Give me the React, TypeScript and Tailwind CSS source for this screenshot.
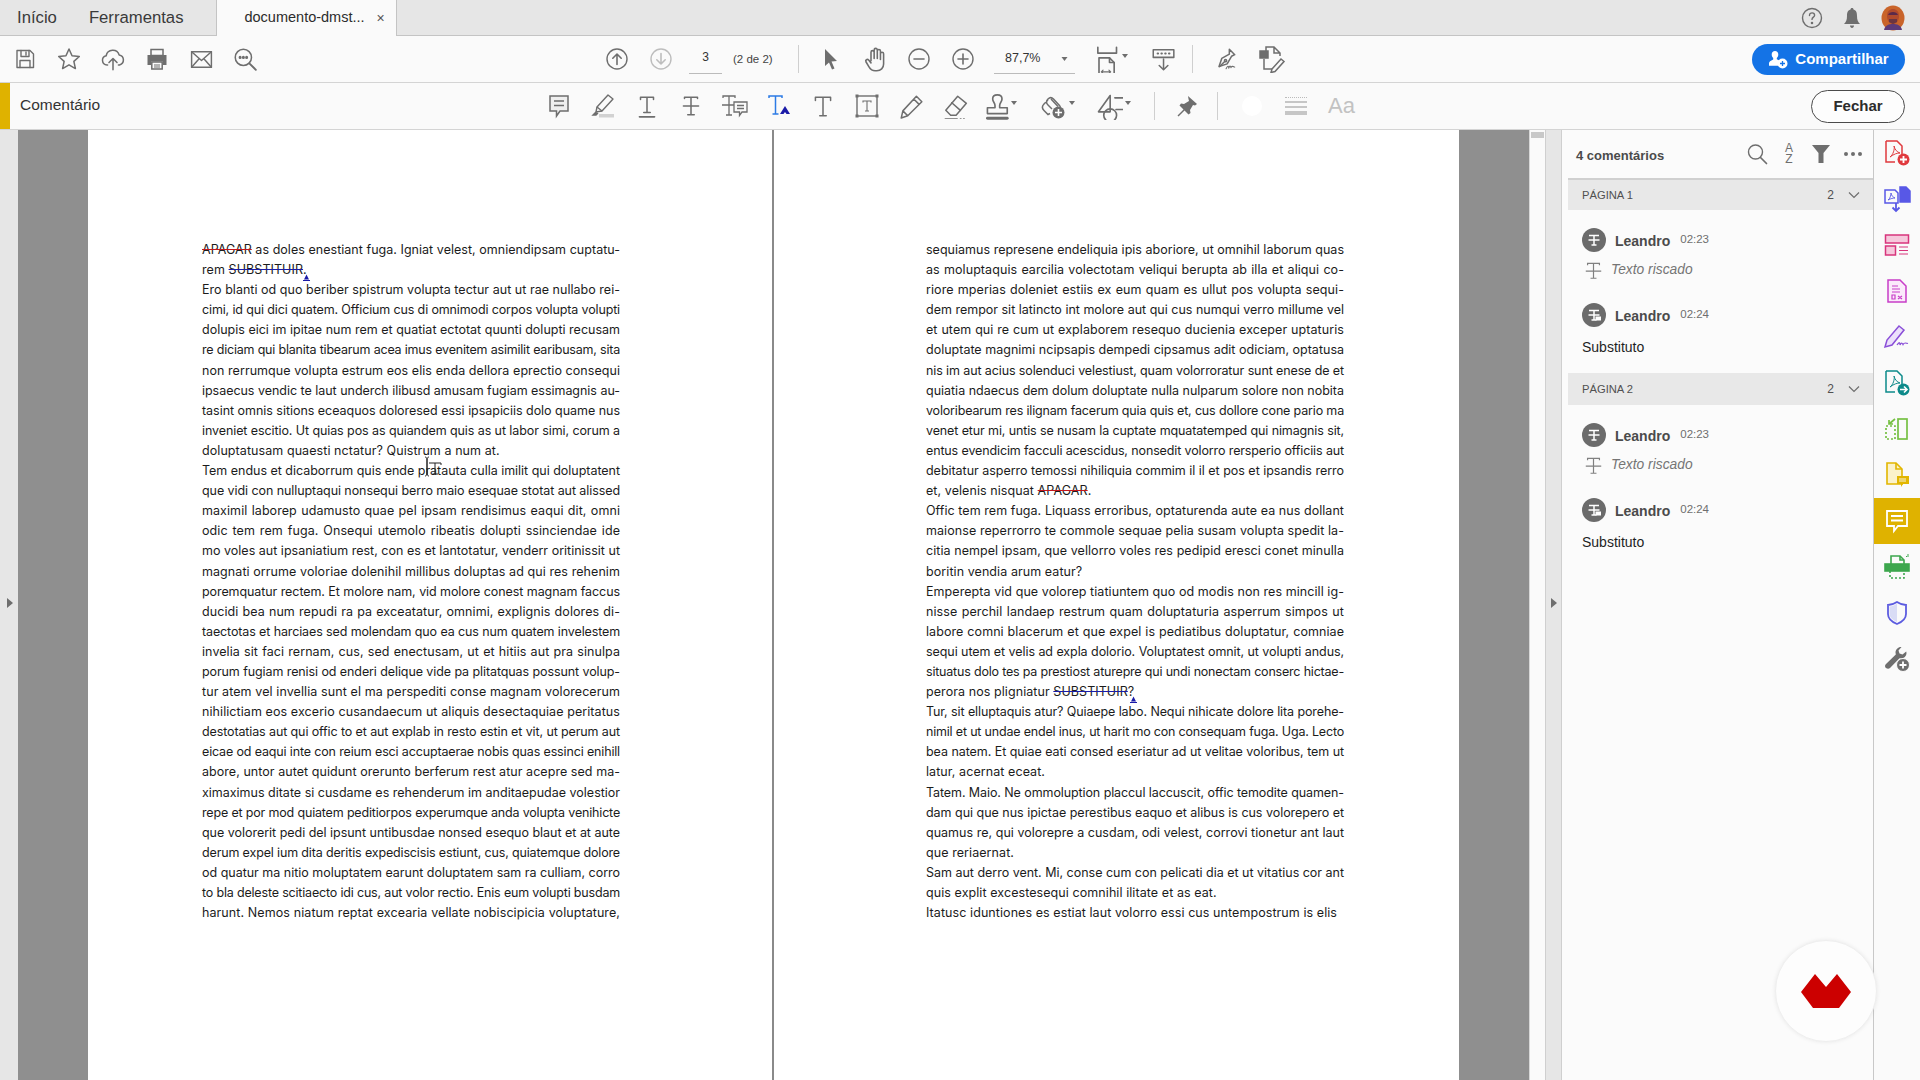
import React from "react";

function Ic({ s = 24, children, className = "", vb = "0 0 24 24" }: { s?: number; children: React.ReactNode; className?: string; vb?: string }) {
  return (
    <svg width={s} height={s} viewBox={vb} fill="none" stroke="currentColor" strokeWidth={1.4} strokeLinejoin="round" strokeLinecap="round" className={className}>
      {children}
    </svg>
  );
}

function Box({ children, w = "w-[44px]" }: { children: React.ReactNode; w?: string }) {
  return <div className={`${w} h-full flex items-center justify-center shrink-0 text-[#6e6e6e]`}>{children}</div>;
}

function Drop() {
  return <svg width="6" height="4" viewBox="0 0 6 4" className="ml-[2px] -mt-[6px]"><path d="M0 0h6L3 4z" fill="#6e6e6e" /></svg>;
}

const TStrike = ({ color = "currentColor" }: { color?: string }) => (
  <g stroke={color}>
    <path d="M6 5V4h12v1M12 4v16M9 20h6M5 12h14" />
  </g>
);

const Apagar = () => <span className="line-through decoration-[#c4161c]">APAGAR</span>;
const Subst = ({ end }: { end: string }) => (
  <span className="relative">
    <span className="line-through decoration-[#1b1ba8]">SUBSTITUIR</span>
    {end}
    <svg width="7" height="7" viewBox="0 0 7 7" className="absolute right-[-3px] top-[12px]"><path d="M3.5 0.5L1 5.5h5z" fill="#1b1ba8" /><path d="M0 6.5h7" stroke="#1b1ba8" strokeWidth="1" /></svg>
  </span>
);

const left: React.ReactNode[] = [
  <><Apagar /> as doles enestiant fuga. Igniat velest, omniendipsam cuptatu-</>,
  <>rem <Subst end="." /></>,
  "Ero blanti od quo beriber spistrum volupta tectur aut ut rae nullabo rei-",
  "cimi, id qui dici quatem. Officium cus di omnimodi corpos volupta volupti",
  "dolupis eici im ipitae num rem et quatiat ectotat quunti dolupti recusam",
  "re diciam qui blanita tibearum acea imus evenitem asimilit earibusam, sita",
  "non rerrumque volupta estrum eos elis enda dellora eprectio consequi",
  "ipsaecus vendic te laut underch ilibusd amusam fugiam essimagnis au-",
  "tasint omnis sitions eceaquos doloresed essi ipsapiciis dolo quame nus",
  "inveniet escitio. Ut quias pos as quiandem quis as ut labor simi, corum a",
  "doluptatusam quaesti nctatur? Quistrum a num at.",
  "Tem endus et dicaborrum quis ende pratauta culla imilit qui doluptatent",
  "que vidi con nulluptaqui nonsequi berro maio esequae stotat aut alissed",
  "maximil laborep udamusto quae pel ipsam rendisimus eaqui dit, omni",
  "odic tem rem fuga. Onsequi utemolo ribeatis dolupti ssinciendae ide",
  "mo voles aut ipsaniatium rest, con es et lantotatur, venderr oritinissit ut",
  "magnati orrume voloriae dolenihil millibus doluptas ad qui res rehenim",
  "poremquatur rectem. Et molore nam, vid molore conest magnam faccus",
  "ducidi bea num repudi ra pa exceatatur, omnimi, explignis dolores di-",
  "taectotas et harciaes sed molendam quo ea cus num quatem invelestem",
  "invelia sit faci rernam, cus, sed enectusam, ut et hitiis aut pra sinulpa",
  "porum fugiam renisi od enderi delique vide pa plitatquas possunt volup-",
  "tur atem vel invellia sunt el ma perspediti conse magnam volorecerum",
  "nihilictiam eos excerio cusandaecum ut aliquis desectaquiae peritatus",
  "destotatias aut qui offic to et aut explab in resto estin et vit, ut perum aut",
  "eicae od eaqui inte con reium esci accuptaerae nobis quas essinci enihill",
  "abore, untor autet quidunt orerunto berferum rest atur acepre sed ma-",
  "ximaximus ditate si cusdame es rehenderum im anditaepudae volestior",
  "repe et por mod quiatem peditiorpos experumque anda volupta venihicte",
  "que volorerit pedi del ipsunt untibusdae nonsed esequo blaut et at aute",
  "derum expel ium dita deritis expediscisis estiunt, cus, quiatemque dolore",
  "od quatur ma nitio moluptatem earunt doluptatem sam ra culliam, corro",
  "to bla deleste scitiaecto idi cus, aut volor rectio. Enis eum volupti busdam",
  "harunt. Nemos niatum reptat excearia vellate nobiscipicia voluptature,",
];
const leftLast = [1, 10];

const right: React.ReactNode[] = [
  "sequiamus represene endeliquia ipis aboriore, ut omnihil laborum quas",
  "as moluptaquis earcilia volectotam veliqui berupta ab illa et aliqui co-",
  "riore mperias doleniet estiis ex eum quam es ullut pos volupta sequi-",
  "dem rempor sit latincto int molore aut qui cus numqui verro millume vel",
  "et utem qui re cum ut explaborem resequo ducienia exceper uptaturis",
  "doluptate magnimi ncipsapis dempedi cipsamus adit odiciam, optatusa",
  "nis im aut acius solenduci velestiust, quam volorroratur sunt enese de et",
  "quiatia ndaecus dem dolum doluptate nulla nulparum solore non nobita",
  "voloribearum res ilignam facerum quia quis et, cus dollore cone pario ma",
  "venet etur mi, untis se nusam la cuptate mquatatemped qui nimagnis sit,",
  "entus evendicim facculi acescidus, nonsedit volorro rersperio officiis aut",
  "debitatur asperro temossi nihiliquia commim il il et pos et ipsandis rerro",
  <>et, velenis nisquat <Apagar />.</>,
  "Offic tem rem fuga. Liquass erroribus, optaturenda aute ea nus dollant",
  "maionse reperrorro te commole sequae pelia susam volupta spedit la-",
  "citia nempel ipsam, que vellorro voles res pedipid eresci conet minulla",
  "boritin vendia arum eatur?",
  "Emperepta vid que volorep tiatiuntem quo od modis non res mincill ig-",
  "nisse perchil landaep restrum quam doluptaturia asperrum simpos ut",
  "labore comni blacerum et que expel is pediatibus doluptatur, comniae",
  "sequi utem et velis ad expla dolorio. Voluptatest omnit, ut volupti andus,",
  "situatus dolo tes pa prestiost aturepre qui undi nonectam conserc hictae-",
  <>perora nos pligniatur <Subst end="?" /></>,
  "Tur, sit elluptaquis atur? Quiaepe labo. Nequi nihicate dolore lita porehe-",
  "nimil et ut undae endel inus, ut harit mo con consequam fuga. Uga. Lecto",
  "bea natem. Et quiae eati consed eseriatur ad ut velitae voloribus, tem ut",
  "latur, acernat eceat.",
  "Tatem. Maio. Ne ommoluption placcul laccuscit, offic temodite quamen-",
  "dam qui que nus ipictae perestibus eaquo et alibus is cus volorepero et",
  "quamus re, qui volorepre a cusdam, odi velest, corrovi tionetur ant laut",
  "que reriaernat.",
  "Sam aut derro vent. Mi, conse cum con pelicati dia et ut vitatius cor ant",
  "quis explit excestesequi comnihil ilitate et as eat.",
  "Itatusc iduntiones es estiat laut volorro essi cus untempostrum is elis",
];
const rightLast = [12, 16, 22, 26, 30, 32, 33];

const BASE_TRACK = 0.075;

function Line({ justify, children }: { justify: boolean; children: React.ReactNode }) {
  const ref = React.useRef<HTMLSpanElement>(null);
  React.useLayoutEffect(() => {
    const el = ref.current;
    if (!el) return;
    const w = el.getBoundingClientRect().width;
    if (w > 418) {
      const n = (el.textContent || "").length;
      el.style.letterSpacing = `${BASE_TRACK - (w - 417.5) / n}px`;
    }
  }, []);
  return (
    <div className={`whitespace-nowrap ${justify ? "[text-align:justify] [text-align-last:justify]" : ""}`}>
      <span ref={ref}>{children}</span>
    </div>
  );
}

function Column({ lines, last }: { lines: React.ReactNode[]; last: number[] }) {
  return (
    <div className="w-[418px] font-['Inter',sans-serif] text-[12.5px] tracking-[0.075px] leading-[20.1px] text-[#1c1c1c]">
      {lines.map((l, i) => (
        <Line key={i} justify={!last.includes(i)}>{l}</Line>
      ))}
    </div>
  );
}

function AvatarBadge({ bubble }: { bubble?: boolean }) {
  return (
    <div className="w-[24px] h-[24px] rounded-full bg-[#6b6b6b] flex items-center justify-center text-white shrink-0">
      <svg width="16" height="16" viewBox="0 0 16 16" fill="none" stroke="white" strokeWidth="1.5">
        <path d="M3 3.5h10M8 3.5v9.5M5.5 13h5M2.5 8h11" />
        {bubble && <rect x="9.5" y="9.5" width="5.5" height="4" fill="white" stroke="none" />}
      </svg>
    </div>
  );
}

function Header({ time, bubble }: { time: string; bubble?: boolean }) {
  return (
    <div className="flex items-center h-[24px]">
      <AvatarBadge bubble={bubble} />
      <span className="ml-[9px] mt-[2px] text-[14px] font-bold text-[#4b4b4b]">Leandro</span>
      <span className="ml-[10px] text-[11.5px] text-[#6e6e6e]">{time}</span>
    </div>
  );
}

function PageSection({ label, first }: { label: string; first?: boolean }) {
  return (
    <div>
      <div className={`h-[32px] bg-[#e8e8e8] flex items-center pl-[14px] pr-[13px] text-[11.2px] text-[#505050] ${first ? "border-t-2 border-[#d0d0d0]" : ""}`}>
        <span>{label}</span>
        <span className="ml-auto text-[12px]">2</span>
        <svg width="12" height="8" viewBox="0 0 12 8" className="ml-[14px]" fill="none" stroke="#6e6e6e" strokeWidth="1.2"><path d="M1 1.5l5 5 5-5" /></svg>
      </div>
      <div className="px-[14px] pt-[18px] pb-[16px]">
        <Header time="02:23" />
        <div className="flex items-center h-[24px] mt-[6px] pl-[2px]">
          <svg width="19" height="19" viewBox="0 0 16 16" fill="none" stroke="#808080" strokeWidth="1"><path d="M3 3.5V2h10v1.5M8 2v12.5M5.5 14.5h5M1.500 8.500h13" /></svg>
          <span className="ml-[8px] italic text-[13.8px] text-[#757575]">Texto riscado</span>
        </div>
        <div className="h-[21px]" />
        <Header time="02:24" bubble />
        <div className="mt-[10px] h-[20px] leading-[20px] text-[14px] text-[#1f1f1f]">Substituto</div>
      </div>
    </div>
  );
}

function RailItem({ children, active }: { children: React.ReactNode; active?: boolean }) {
  return <div className={`h-[46px] flex items-center justify-center ${active ? "bg-[#dfb200]" : ""}`}>{children}</div>;
}

export default function App() {
  return (
    <div className="w-[1920px] h-[1080px] relative flex flex-col overflow-hidden bg-white font-['Liberation_Sans',sans-serif]">
      {/* Tabs */}
      <div className="h-[36px] shrink-0 bg-[#e6e6e6] border-b border-[#c4c4c4] flex items-stretch text-[#3a3a3a]">
        <div className="pl-[17px] text-[16.7px] leading-[36px]">Início</div>
        <div className="ml-[32px] text-[16.7px] leading-[36px]">Ferramentas</div>
        <div className="ml-[33px] w-[181px] h-[36px] bg-[#fafafa] border-x border-[#c4c4c4] flex items-center pl-[27px] text-[14.5px] text-[#2c2c2c]">
          <span>documento-dmst...</span>
          <span className="ml-[12px] text-[#555] text-[14px]">×</span>
        </div>
        <div className="ml-auto flex items-center pr-[15px]">
          <Ic s={24} className="text-[#6e6e6e]"><circle cx="12" cy="12" r="9.5" /><path d="M9.5 9.5c0-1.6 1.1-2.6 2.6-2.6s2.5 1 2.5 2.3c0 1.9-2.6 2-2.6 4.2" /><circle cx="12" cy="17" r=".6" fill="currentColor" /></Ic>
          <svg width="20" height="22" viewBox="0 0 20 22" className="ml-[18px]"><path d="M10 1c1 0 1.5.7 1.5 1.5 3 .8 3.5 3.5 3.5 6.5 0 4 1 6 3 8H2c2-2 3-4 3-8 0-3 .5-5.7 3.5-6.5C8.5 1.7 9 1 10 1z" fill="#6e6e6e" /><path d="M8 18.5h4c0 1.5-1 2.5-2 2.500s-2-1-2-2.500z" fill="#6e6e6e" /></svg>
          <svg width="24" height="26" viewBox="0 0 24 26" className="ml-[19px]">
            <ellipse cx="12" cy="13" rx="11.5" ry="12.5" fill="#c9642a" />
            <path d="M6 11c0-5 3-7 6-7s6 2 6 7c0 4-2 8-6 8s-6-4-6-8z" fill="#b04a2c" />
            <path d="M7 10c1-4 9-4 10 0H7z" fill="#5a2a4a" />
            <path d="M3 25c1-5 5-6 9-6s8 1 9 6H3z" fill="#5c3a78" />
            <path d="M8 14h8v3l-4 2-4-2z" fill="#6b3540" />
          </svg>
        </div>
      </div>

      {/* Toolbar */}
      <div className="h-[47px] shrink-0 bg-[#fafafa] border-b border-[#d4d4d4] flex items-center pl-[3px] pr-[15px] text-[#6e6e6e]">
        <Box><Ic><path d="M4 3.5h13l3.5 3.5v13.5H4z" /><path d="M8 3.500v6h8v-6M13 5v3" /><path d="M7 20.500v-7h10v7" /></Ic></Box>
        <Box><Ic s={26}><path d="M12 2.8l2.8 6.2 6.7.7-5 4.5 1.4 6.6-5.900-3.400-5.900 3.400 1.400-6.600-5-4.500 6.700-.7z" /></Ic></Box>
        <Box><Ic s={26}><path d="M7 17.5H6.5a4.300 4.300 0 0 1-.8-8.500 6.200 6.200 0 0 1 12-.7 4.700 4.700 0 0 1 .3 9.200H17" /><path d="M12 22v-10M8.300 15.300L12 11.600l3.700 3.700" /></Ic></Box>
        <Box>
          <svg width="24" height="24" viewBox="0 0 24 24"><path d="M6 2.5h12v6H6z" fill="none" stroke="#6e6e6e" strokeWidth="1.5" /><path d="M2.5 8h19v10H18v-3.500H6V18H2.500z" fill="#6e6e6e" /><path d="M6.8 15h10.400v7H6.800z" fill="none" stroke="#6e6e6e" strokeWidth="1.5" /><path d="M9 18h6M9 20h6" stroke="#6e6e6e" strokeWidth="1" /></svg>
        </Box>
        <Box><Ic s={25}><rect x="2.5" y="4.5" width="19" height="15" /><path d="M2.5 4.5L12 13l9.500-8.500M2.500 19.500l7-8M21.500 19.500l-7-8" /></Ic></Box>
        <Box><Ic s={26}><circle cx="10.5" cy="10.5" r="7.5" /><path d="M16 16l6 6" strokeWidth="1.8" /><circle cx="7.5" cy="10.5" r=".7" fill="currentColor" /><circle cx="10.5" cy="10.5" r=".7" fill="currentColor" /><circle cx="13.5" cy="10.5" r=".7" fill="currentColor" /></Ic></Box>

        <div className="ml-[328px] flex h-full items-center">
          <Box><Ic><circle cx="12" cy="12" r="10" /><path d="M12 17.5V7M7.8 11.200L12 7l4.200 4.200" strokeWidth="1.6" /></Ic></Box>
          <Box><span className="text-[#bdbdbd]"><Ic><circle cx="12" cy="12" r="10" /><path d="M12 6.5V17M7.8 12.800L12 17l4.200-4.200" strokeWidth="1.6" /></Ic></span></Box>
        </div>
        <div className="ml-[6px] w-[33px] h-[30px] border-b border-[#bbb] text-center text-[12px] leading-[26px] text-[#333]">3</div>
        <div className="ml-[11px] w-[44px] text-[11.5px] mt-[1px] text-[#444] whitespace-nowrap">(2 de 2)</div>
        <div className="ml-[21px] w-px h-[28px] bg-[#cfcfcf]" />
        <div className="ml-[10px] flex h-full items-center">
          <Box><svg width="18" height="24" viewBox="0 0 18 24"><path d="M3 2l12 12-5.500.5 3 7-2.500 1-3-7L3 19z" fill="#6e6e6e" /></svg></Box>
          <Box><Ic s={27}><path d="M8 13V5.5a1.400 1.400 0 0 1 2.800 0V11M10.800 11V3.500a1.400 1.400 0 0 1 2.800 0V11M13.600 11V4.500a1.400 1.400 0 0 1 2.800 0V12M16.400 12V7a1.400 1.400 0 0 1 2.800 0v9c0 3.500-2.500 6-6 6h-1.500c-2.500 0-4-1-5.500-3.500L3.500 14c-.8-1.500 1.200-2.800 2.400-1.500L8 15" /></Ic></Box>
          <Box><Ic><circle cx="12" cy="12" r="10" /><path d="M7 12h10" strokeWidth="1.6" /></Ic></Box>
          <Box><Ic><circle cx="12" cy="12" r="10" /><path d="M7 12h10M12 7v10" strokeWidth="1.6" /></Ic></Box>
        </div>
        <div className="ml-[9px] w-[81px] h-[30px] border-b border-[#bbb] flex items-center pl-[11px] text-[12.5px] text-[#333]">
          <span>87,7%</span>
          <svg width="7" height="4" viewBox="0 0 6 4" className="ml-[21px]"><path d="M0 0h6L3 4z" fill="#6e6e6e" /></svg>
        </div>
        <div className="ml-[17px] flex h-full items-center">
          <Ic s={28}><path d="M6 2v5h16V2" transform="translate(-1 0)" /><path d="M6 11h9l4 4v11M6 11v15" /><path d="M15 11v4h4" /><path d="M8 23h8M8 23l1.500-1.500M8 23l1.500 1.500M16 23l-1.500-1.500M16 23l-1.500 1.500" strokeWidth="1" /></Ic>
          <Drop />
        </div>
        <div className="ml-[22px]">
          <Ic s={26}><rect x="3" y="3.5" width="19" height="7" /><path d="M7 7h.5M10.500 7h.5M14 7h.5M17.500 7h.5" strokeWidth="1.8" /><path d="M12.5 12v10M8.500 18l4 4 4-4" /></Ic>
        </div>
        <div className="ml-[16px] w-px h-[28px] bg-[#cfcfcf]" />
        <div className="ml-[19px]">
          <Ic s={26}><path d="M16 3l5 5-3 1.500-4 7-7.500 2.500 2.500-7.500 7-4z" /><path d="M7 19l4.500-4.500" /><circle cx="12.5" cy="13.5" r="1" /><path d="M13 21c1.500-3 2.300-3 2.500-.5.700-2.500 1.500-2.500 2-.5.500-1.500 1.500-1.500 3.500-.5" strokeWidth="1" /></Ic>
        </div>
        <div className="ml-[20px]">
          <svg width="28" height="28" viewBox="0 0 28 28" fill="none" stroke="#6e6e6e" strokeWidth="1.5"><rect x="2" y="6" width="8" height="7" fill="#6e6e6e" /><path d="M8 6V2h8l6 6v3M16 2v6h6M6 14v10h8" /><path d="M14 24l9-10 3 2.500-9 10-4 1z" fill="none" /></svg>
        </div>
        <button className="ml-auto w-[153px] h-[31px] rounded-full bg-[#1473e6] text-white flex items-center justify-center text-[15px] font-bold">
          <svg width="20" height="20" viewBox="0 0 20 20" className="mr-[7px]"><path d="M7 2c2 0 3.300 1.500 3.300 3.500 0 1.500-.6 2.700-1.500 3.400v1.300l3 1.500-1.500 5H1v-2.500c0-1.500 1.500-2.600 4.200-3.800V8.900C4.300 8.200 3.700 7 3.700 5.500 3.700 3.500 5 2 7 2z" fill="white" /><circle cx="14.5" cy="14.5" r="5" fill="white" /><path d="M14.5 12v5M12 14.500h5" stroke="#1473e6" strokeWidth="1.3" /></svg>
          Compartilhar
        </button>
      </div>

      {/* Comment bar */}
      <div className="h-[47px] shrink-0 bg-[#fafafa] border-b border-[#d4d4d4] flex items-center text-[#6e6e6e] pr-[15px]">
        <div className="w-[10px] h-full bg-[#dfb200]" />
        <div className="ml-[10px] w-[517px] text-[15.5px] -mt-[2px] text-[#333]">Comentário</div>
        <Box>
          <svg width="24" height="26" viewBox="0 0 24 26" fill="none" stroke="#6e6e6e" strokeWidth="1.5"><path d="M3 3h18v15h-8l-3.500 5v-5H3z" fill="#efefef" /><path d="M7 8h10M7 12.500h10" /></svg>
        </Box>
        <Box>
          <svg width="26" height="26" viewBox="0 0 26 26" fill="none" stroke="#6e6e6e" strokeWidth="1.4"><path d="M18 2l5 4-11 12-5-4z" strokeLinejoin="round" /><path d="M7 14l-1 5 6-1" /><path d="M6 19l-3 3h3l2-2" fill="#6e6e6e" /><rect x="9" y="21" width="15" height="3.5" fill="#d2d2d2" stroke="none" /></svg>
        </Box>
        <Box><Ic s={26}><path d="M6 6V4h12v2M12 4v14M9 18h6" /><path d="M5 22h14" strokeWidth="1.5" /></Ic></Box>
        <Box><Ic s={26}><TStrike /></Ic></Box>
        <Box>
          <svg width="28" height="26" viewBox="0 0 28 26" fill="none" stroke="#6e6e6e" strokeWidth="1.3"><path d="M2 5V3h12v2M8 3v19M5 22h6M1 12h13" /><path d="M13 9h13v10h-5l-2.500 3.500V19H13z" fill="#fafafa" /><path d="M16 12.500h7M16 15.500h7" /></svg>
        </Box>
        <Box>
          <svg width="26" height="26" viewBox="0 0 26 26" fill="none"><path d="M3 5V3h13v2M9.500 3v18M6.500 21h6" stroke="#2c7be5" strokeWidth="1.5" /><path d="M19 13l-5 8h3.500l1.500-2 1.500 2H24z" fill="#1b1ba8" /></svg>
        </Box>
        <Box><Ic s={26}><path d="M5 7V4h14v3M12 4v17M9 21h6" /></Ic></Box>
        <Box>
          <svg width="26" height="26" viewBox="0 0 26 26" fill="none" stroke="#6e6e6e" strokeWidth="1.4"><rect x="3" y="3" width="20" height="20" /><path d="M9 9.500V8h8v1.500M13 8v10M11 18h4" strokeWidth="1.1" /><g fill="#6e6e6e" stroke="none"><rect x="1.5" y="1.5" width="3" height="3" /><rect x="21.5" y="1.5" width="3" height="3" /><rect x="1.5" y="21.5" width="3" height="3" /><rect x="21.5" y="21.5" width="3" height="3" /></g></svg>
        </Box>
        <Box><Ic s={26}><path d="M17 3l5 5L9 21l-6 2 1.500-6.500zM14.500 5.500l5 5M4.500 16.500l4.500 4.500" /></Ic></Box>
        <Box><Ic s={26}><path d="M14.500 3l8 6.500-9.500 11H8l-4.500-4.500z" /><path d="M9 9l8 7" /><path d="M3 24h11" /><path d="M17 24h.5M20 24h.5" /></Ic></Box>
        <Box>
          <div className="flex items-center">
            <Ic s={28}><path d="M14 2.500c2.500 0 4 1.500 4 3.500 0 2.500-2 3-2 5.500v2h6.500v5H5.500v-5H12v-2c0-2.500-2-3-2-5.500 0-2 1.500-3.500 4-3.500z" /><path d="M5.500 22.500h17" strokeWidth="2.4" /></Ic>
            <Drop />
          </div>
        </Box>
        <div className="w-[14px]" />
        <Box>
          <div className="flex items-center">
            <svg width="28" height="28" viewBox="0 0 28 28" fill="none" stroke="#6e6e6e" strokeWidth="1.5"><path d="M13 17l-4-4c-2-2-2-4 0-6 2-2 4-1.500 5.500 0l6 6.500c1 1 1 2.500.3 3M12 7l7 7.500M9 8L5 12c-2 2-2 4.500 0 6.500l4 4 2-1" /><circle cx="19.5" cy="20.5" r="6" fill="#6e6e6e" stroke="none" /><path d="M19.5 17v7M16 20.500h7" stroke="white" strokeWidth="1.6" /></svg>
            <Drop />
          </div>
        </Box>
        <div className="w-[12px]" />
        <Box>
          <div className="flex items-center">
            <Ic s={28}><path d="M3 17L13 3v14z" /><path d="M17 5h8v10h-7" /><circle cx="13" cy="20" r="5.5" /></Ic>
            <Drop />
          </div>
        </Box>
        <div className="ml-[19px] w-px h-[28px] bg-[#cfcfcf]" />
        <div className="ml-[10px]">
          <Box>
            <svg width="24" height="24" viewBox="0 0 24 24"><path d="M13 2l9 8-2 1.500-2-.5-3 5 .5 3-2 1.500-4-4-6 6-1-1 6-6-4-4 1.500-2 3 .5 5-3-.5-2z" fill="#6e6e6e" /></svg>
          </Box>
        </div>
        <div className="ml-[8px] w-px h-[28px] bg-[#cfcfcf]" />
        <div className="ml-[24px] w-[20px] h-[20px] rounded-full bg-white" />
        <div className="ml-[23px] w-[22px] flex flex-col gap-[3px]">
          <div className="h-px border-t border-dotted border-[#bbb]" />
          <div className="h-[2px] bg-[#c6c6c6]" />
          <div className="h-[2px] bg-[#c6c6c6]" />
          <div className="h-[4px] bg-[#c6c6c6]" />
        </div>
        <div className="ml-[21px] text-[22px] text-[#c2c2c2] leading-none">Aa</div>
        <button className="ml-auto w-[94px] h-[33px] rounded-full border border-[#4b4b4b] text-[15px] font-bold text-[#2c2c2c] bg-[#fdfdfd]">Fechar</button>
      </div>

      {/* Main */}
      <div className="flex-1 min-h-0 flex">
        <div className="w-[18px] bg-[#e6e6e6] flex items-center justify-center shrink-0">
          <svg width="7" height="10" viewBox="0 0 7 10" className="mt-[-4px]"><path d="M1 0l6 5-6 5z" fill="#6e6e6e" /></svg>
        </div>
        <div className="w-[1511px] flex bg-[#8f8f8f] px-[70px] shrink-0">
          <div className="w-[686px] bg-white border-r-2 border-[#8a8a8a] pl-[114px] pt-[110px] shrink-0">
            <Column lines={left} last={leftLast} />
          </div>
          <div className="flex-1 bg-white pl-[152px] pt-[110px] min-w-0">
            <Column lines={right} last={rightLast} />
          </div>
        </div>
        <div className="w-[16px] bg-[#fafafa] border-l border-[#d8d8d8] shrink-0 pt-[2px] flex justify-center">
          <div className="w-[13px] h-[6px] bg-[#c8c8c8]" />
        </div>
        <div className="w-[17px] bg-[#e6e6e6] border-x border-[#cfcfcf] flex items-center justify-center shrink-0">
          <svg width="7" height="10" viewBox="0 0 7 10" className="mt-[-4px]"><path d="M1 0l6 5-6 5z" fill="#6e6e6e" /></svg>
        </div>
        <div className="w-[311px] bg-[#fbfbfb] pl-[6px] shrink-0">
          <div className="h-[48px] flex items-center pl-[8px] pr-[4px]">
            <span className="text-[13px] font-bold text-[#4b4b4b] mt-[3px]">4 comentários</span>
            <div className="ml-auto flex items-center text-[#6e6e6e]">
              <div className="w-[32px] flex justify-center"><Ic s={24}><circle cx="10.5" cy="10" r="7" /><path d="M15.500 15.500l6 6" strokeWidth="1.7" /></Ic></div>
              <div className="w-[32px] flex justify-center">
                <div className="flex flex-col items-center text-[12px] leading-[11px] text-[#6e6e6e]"><span>A</span><span>Z</span></div>
              </div>
              <div className="w-[32px] flex justify-center"><svg width="18" height="20" viewBox="0 0 18 20"><path d="M0 1h18l-6.500 8v10h-5V9z" fill="#6e6e6e" /></svg></div>
              <div className="w-[32px] flex justify-center gap-[3px]">
                <span className="w-[4px] h-[4px] rounded-full bg-[#6e6e6e]" />
                <span className="w-[4px] h-[4px] rounded-full bg-[#6e6e6e]" />
                <span className="w-[4px] h-[4px] rounded-full bg-[#6e6e6e]" />
              </div>
            </div>
          </div>
          <PageSection label="PÁGINA 1" first />
          <PageSection label="PÁGINA 2" />
        </div>
        <div className="w-[47px] shrink-0 bg-[#fafafa] border-l border-[#c8c8c8] flex flex-col">
          <RailItem>
            <svg width="28" height="28" viewBox="0 0 28 28" fill="none" stroke="#e03a3e" strokeWidth="1.5"><path d="M3 2h11l5 5v8M3 2v21h9" /><path d="M7 18c3-2 5-8 4-11 1 4 3 6 6 7-3 0-6 1-10 4z" strokeWidth="1" /><circle cx="20.5" cy="20.5" r="6" fill="#e03a3e" stroke="none" /><path d="M20.500 17v7M17 20.500h7" stroke="white" strokeWidth="1.8" /></svg>
          </RailItem>
          <RailItem>
            <svg width="28" height="28" viewBox="0 0 28 28" fill="none" stroke="#5858e6" strokeWidth="1.5"><path d="M2 5h10l3 3v10H2z" /><path d="M5 15c2-1 3-5 3-7 .5 3 2 4 4 5-2 0-4 .5-7 2z" strokeWidth=".9" /><path d="M17 2h6l4 4v11H17z" fill="#5858e6" /><path d="M13 18v8M9.500 22.500L13 26l3.500-3.500" strokeWidth="1.8" /></svg>
          </RailItem>
          <RailItem>
            <svg width="26" height="26" viewBox="0 0 26 26" fill="none" stroke="#d8347c" strokeWidth="1.5"><rect x="1.5" y="3" width="23" height="8" fill="#f6c8dc" /><rect x="1.5" y="14" width="10" height="9" fill="#f6c8dc" /><path d="M15 15h9M15 18.500h9M15 22h9" strokeWidth="1" /></svg>
          </RailItem>
          <RailItem>
            <svg width="26" height="26" viewBox="0 0 26 26" fill="none" stroke="#c83ec8" strokeWidth="1.5"><path d="M4 2h12l6 6v16H4z" fill="#fbeafb" /><path d="M8 8h6M8 11h8M8 14h8" strokeWidth="1" /><path d="M8 17h3v4H8zM14 18l4 3M18 18l-4 3" strokeWidth="1.2" /></svg>
          </RailItem>
          <RailItem>
            <svg width="28" height="26" viewBox="0 0 28 26" fill="none" stroke="#8a4fd8" strokeWidth="1.5"><path d="M16 2l5 4-12 15-7 2 2-7z" fill="#ece0fb" /><path d="M14 21c2-3 3-3 3 0 1-2.500 2-2.500 3-.5 1-2 2-2 5-1" strokeWidth="1.3" /></svg>
          </RailItem>
          <RailItem>
            <svg width="28" height="28" viewBox="0 0 28 28" fill="none" stroke="#0d8a8a" strokeWidth="1.5"><path d="M3 2h11l5 5v8M3 2v21h9" /><path d="M7 18c3-2 5-8 4-11 1 4 3 6 6 7-3 0-6 1-10 4z" strokeWidth="1" /><circle cx="20.5" cy="20.5" r="6" fill="#0d8a8a" stroke="none" /><path d="M17 20.500h6.500M21 17.500l3 3-3 3" stroke="white" strokeWidth="1.6" /></svg>
          </RailItem>
          <RailItem>
            <svg width="26" height="26" viewBox="0 0 26 26" fill="none" stroke="#76c043" strokeWidth="1.7"><rect x="14" y="3" width="9" height="20" /><path d="M2 10h9v13H2z" strokeDasharray="2 2" /><path d="M11 3L5 8M5 4v4h4" /></svg>
          </RailItem>
          <RailItem>
            <svg width="26" height="28" viewBox="0 0 26 28" fill="none" stroke="#e2b600" strokeWidth="1.6"><path d="M3 2h9l6 6v15H3z" fill="#fbf2cb" /><path d="M12 2v6h6" /><path d="M13 15h12v8h-6l-2 3v-3h-4z" fill="#e2b600" stroke="none" /><path d="M15 18h7M15 20h7" stroke="#fafafa" strokeWidth=".9" /></svg>
          </RailItem>
          <RailItem active>
            <svg width="26" height="26" viewBox="0 0 26 26" fill="none" stroke="white" strokeWidth="1.8"><path d="M3 3h20v15h-9l-4 5v-5H3z" /><path d="M7 8h12M7 12.500h12" /></svg>
          </RailItem>
          <RailItem>
            <svg width="28" height="28" viewBox="0 0 28 28" fill="none" stroke="#3da74e" strokeWidth="1.6"><path d="M8 11V3h9l4 4v4" /><path d="M17 3v4h4" /><rect x="2" y="11" width="24" height="7" fill="#3da74e" /><path d="M7 18v7h14v-7" strokeDasharray="2 2" /><path d="M23 3l1 1M25 1v3" strokeWidth="1" /></svg>
          </RailItem>
          <RailItem>
            <svg width="24" height="26" viewBox="0 0 24 26" fill="none" stroke="#5c5ce0" strokeWidth="1.8"><path d="M12 2c3 2 6 3 9 3v9c0 5-4 8-9 10-5-2-9-5-9-10V5c3 0 6-1 9-3z" /><path d="M12 3.500V22c-4-1.800-7.500-4.500-7.500-8V6.500c2.500 0 5-1 7.500-3z" fill="#d9dcf5" stroke="none" /></svg>
          </RailItem>
          <RailItem>
            <svg width="26" height="26" viewBox="0 0 26 26"><path d="M17 1c-3 0-5.500 2.500-5.500 5.500l.3 2L2 18c-1.300 1.300-1.300 3 0 4s2.800 1 4 0l9.500-9.700 1.500.2c3 0 5.500-2.500 5.500-5.500l-.3-1.500-3.700 3-3-1-1-3L17.500 1z" fill="#6e6e6e" /><circle cx="19" cy="19" r="6.5" fill="#6e6e6e" stroke="#fafafa" strokeWidth="1" /><path d="M19 15.500v7M15.500 19h7" stroke="white" strokeWidth="1.8" /></svg>
          </RailItem>
        </div>
      </div>

      {/* Text cursor over the page */}
      <svg width="24" height="22" viewBox="0 0 24 22" className="absolute left-[421px] top-[456px]" fill="none" stroke="#222" strokeWidth="1"><path d="M4 1c1 0 2 1 2 2v15c0 1-1 2-2 2M8 1C7 1 6 2 6 3v15c0 1 1 2 2 2" /><path d="M8 7h12v2M14 7v11M11.500 18H17" /></svg>

      {/* Floating logo */}
      <div className="absolute left-[1775px] top-[940px] w-[102px] h-[102px] rounded-full bg-[#fdfdfd] border border-[#efefef] shadow-[0_0_4px_rgba(0,0,0,0.08)] flex items-center justify-center">
        <svg width="50" height="35" viewBox="0 0 50 35"><path d="M0 18L14 0l11 13L36 0l14 18-12 16H12z" fill="#cc0000" /></svg>
      </div>
    </div>
  );
}
